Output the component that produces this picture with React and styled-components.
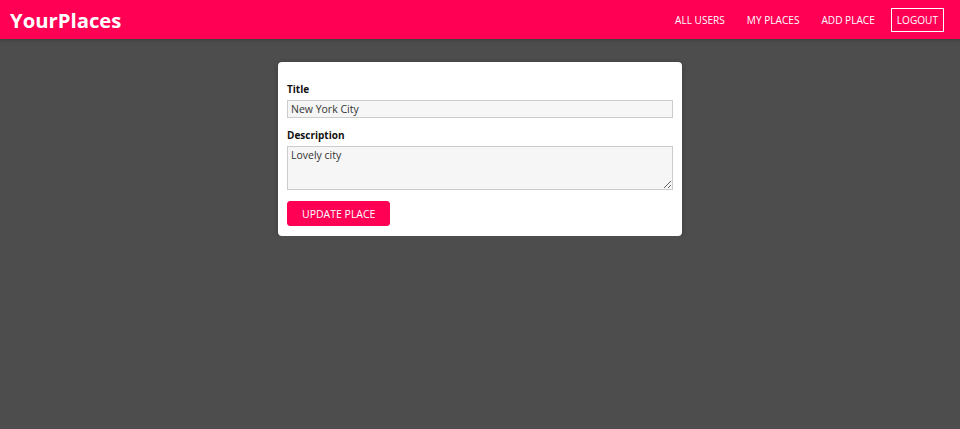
import React from "react";
import styled, { createGlobalStyle } from "styled-components";

const GlobalStyle = createGlobalStyle`
  html, body {
    margin: 0;
    padding: 0;
    background: #4d4d4d;
    font-family: "Open Sans", "Liberation Sans", sans-serif;
  }
  * { box-sizing: border-box; }
`;

const Header = styled.header`
  height: 39px;
  background: #ff0055;
  display: flex;
  align-items: center;
  justify-content: space-between;
  padding: 0 16px 0 10px;
  box-shadow: 0 1px 4px rgba(0, 0, 0, 0.26);
`;

const Logo = styled.h1`
  margin: 0;
  color: white;
  font-size: 20.3px;
  font-weight: 700;
`;

const Nav = styled.ul`
  list-style: none;
  margin: 0;
  padding: 0;
  display: flex;
  align-items: center;
`;

const NavItem = styled.li`
  margin-left: 10px;
`;

const NavLink = styled.a`
  display: block;
  color: white;
  font-size: 10.1px;
  line-height: 14px;
  text-decoration: none;
  padding: 4px 5px;
  border: 1px solid ${(p) => (p.$outlined ? "white" : "transparent")};
`;

const Main = styled.main`
  padding-top: 23px;
`;

const Form = styled.form`
  width: 404px;
  margin: 0 auto;
  background: white;
  border-radius: 4px;
  box-shadow: 0 1px 5px rgba(0, 0, 0, 0.26);
  padding: 19px 9px 10px 9px;
`;

const Control = styled.div`
  margin-bottom: 9px;
`;

const Label = styled.label`
  display: block;
  font-size: 10px;
  font-weight: 700;
  color: #111;
  margin-bottom: 3px;
  line-height: 16px;
`;

const Input = styled.input`
  display: block;
  width: 100%;
  height: 18px;
  font: inherit;
  font-size: 10.5px;
  color: #333;
  background: #f6f6f6;
  border: 1px solid #ccc;
  padding: 0 3px;
  outline: none;
`;

const TextArea = styled.textarea`
  display: block;
  width: 100%;
  height: 44px;
  font: inherit;
  font-size: 10.5px;
  color: #333;
  background: #f6f6f6;
  border: 1px solid #ccc;
  padding: 1px 3px;
  outline: none;
  resize: vertical;
`;

const Button = styled.button`
  font: inherit;
  font-size: 10.5px;
  color: white;
  background: #ff0055;
  border: 1px solid #ff0055;
  border-radius: 3px;
  padding: 0 14px;
  height: 25px;
  margin-top: 2px;
  cursor: pointer;
`;

export default function App() {
  return (
    <>
      <GlobalStyle />
      <Header>
        <Logo>YourPlaces</Logo>
        <Nav>
          <NavItem><NavLink>ALL USERS</NavLink></NavItem>
          <NavItem><NavLink>MY PLACES</NavLink></NavItem>
          <NavItem><NavLink>ADD PLACE</NavLink></NavItem>
          <NavItem><NavLink $outlined>LOGOUT</NavLink></NavItem>
        </Nav>
      </Header>
      <Main>
        <Form onSubmit={(e) => e.preventDefault()}>
          <Control>
            <Label htmlFor="title">Title</Label>
            <Input id="title" type="text" defaultValue="New York City" />
          </Control>
          <Control>
            <Label htmlFor="description">Description</Label>
            <TextArea id="description" defaultValue="Lovely city" />
          </Control>
          <Button type="submit">UPDATE PLACE</Button>
        </Form>
      </Main>
    </>
  );
}
